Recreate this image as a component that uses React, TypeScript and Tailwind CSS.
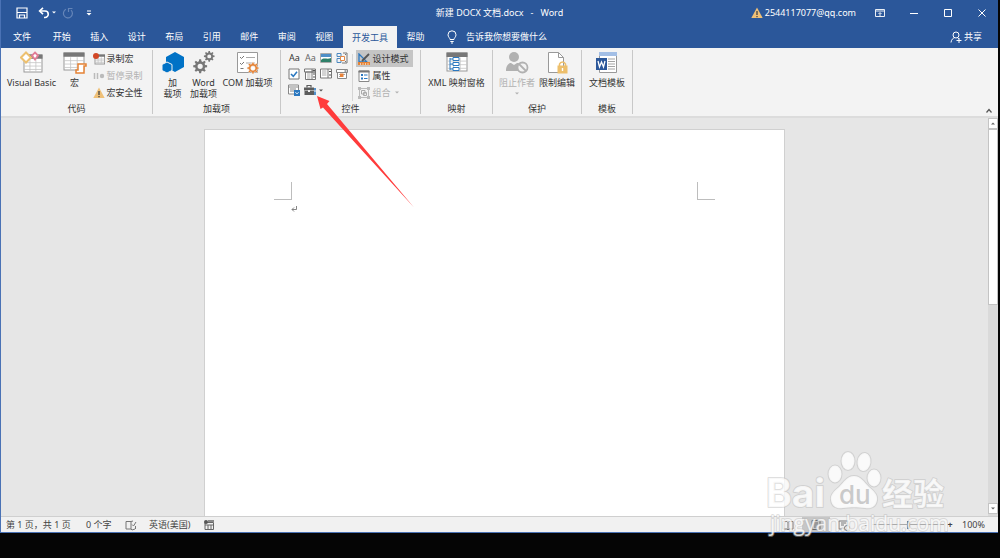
import type { ReactNode } from "react";
import clsx from "clsx";

const TABS = ["开始", "插入", "设计", "布局", "引用", "邮件", "审阅", "视图"];

const GEAR =
  "M10.6 2h2.8l.5 2.9 1.9.8 2.4-1.7 2 2-1.7 2.4.8 1.9 2.9.5v2.8l-2.9.5-.8 1.9 1.7 2.4-2 2-2.4-1.7-1.9.8-.5 2.9h-2.8l-.5-2.9-1.9-.8-2.4 1.7-2-2 1.7-2.4-.8-1.9-2.9-.5v-2.8l2.9-.5.8-1.9L3.8 6l2-2 2.4 1.7 1.9-.8zM12 8.5a3.8 3.8 0 1 0 0 7.6 3.8 3.8 0 0 0 0-7.6z";

function Warning({ className }: { className?: string }) {
  return (
    <svg viewBox="0 0 12 12" className={clsx("size-3 shrink-0", className)}>
      <path d="M6 .5 11.7 11H.3z" fill="#efc077" />
      <path d="M6 4v4M6 9v1.2" stroke="#444" strokeWidth="1.3" />
    </svg>
  );
}

function Caret({ className }: { className?: string }) {
  return (
    <svg viewBox="0 0 4 3" className={clsx("h-[3px] w-1 shrink-0", className)}>
      <path d="M0 .5h4L2 2.5z" fill="currentColor" />
    </svg>
  );
}

function Grid({ x, y, w, h }: { x: number; y: number; w: number; h: number }) {
  return (
    <g>
      <rect x={x} y={y} width={w} height={h} fill="#fff" stroke="#999" />
      <rect x={x - 0.5} y={y - 0.5} width={w + 1} height={h / 4} fill="#777" />
      <path
        d={`M${x} ${y + h * 0.45}h${w}M${x} ${y + h * 0.65}h${w}M${x} ${y + h * 0.85}h${w}M${x + w * 0.33} ${y + h * 0.25}v${h * 0.75}M${x + w * 0.66} ${y + h * 0.25}v${h * 0.75}`}
        stroke="#c4c4c4"
        strokeWidth=".8"
      />
    </g>
  );
}

function Small({ children }: { children: ReactNode }) {
  return (
    <svg viewBox="0 0 12 12" fill="none" className="size-3 shrink-0">
      {children}
    </svg>
  );
}

function BigButton({
  icon,
  lines,
  disabled,
  className,
}: {
  icon: ReactNode;
  lines: string[];
  disabled?: boolean;
  className: string;
}) {
  return (
    <button
      type="button"
      disabled={disabled}
      className={clsx(
        "flex shrink-0 flex-col items-center pt-px whitespace-nowrap",
        disabled && "text-[#b1b1b1]",
        className,
      )}
    >
      <svg viewBox="0 0 24 24" fill="none" className="size-6 shrink-0">
        {icon}
      </svg>
      <span className="mt-0.5 leading-[11px]">
        {lines.map((line) => (
          <span key={line} className="block">
            {line}
          </span>
        ))}
      </span>
      {disabled && <Caret className="mt-1" />}
    </button>
  );
}

function SmallButton({
  icon,
  label,
  disabled,
  active,
  caret,
}: {
  icon: ReactNode;
  label: string;
  disabled?: boolean;
  active?: boolean;
  caret?: boolean;
}) {
  return (
    <button
      type="button"
      disabled={disabled}
      className={clsx(
        "flex h-[17px] items-center gap-0.5 pr-1 pl-0.5 whitespace-nowrap",
        disabled && "text-[#b1b1b1]",
        active && "bg-[#c5c5c5]",
      )}
    >
      {icon}
      <span>{label}</span>
      {caret && <Caret className="ml-0.5" />}
    </button>
  );
}

function Group({
  label,
  className,
  children,
}: {
  label: string;
  className: string;
  children: ReactNode;
}) {
  return (
    <section
      aria-label={label}
      className={clsx(
        "flex h-16 shrink-0 flex-col justify-between border-r border-[#c8c8c8]",
        className,
      )}
    >
      <div className="flex justify-center">{children}</div>
      <h2 className="text-center leading-[11px]">{label}</h2>
    </section>
  );
}

function TitleBar() {
  return (
    <header className="grid h-[25px] grid-cols-[1fr_auto_1fr] items-center bg-[#2b579a] text-white">
      <div className="flex items-center pl-[15px]">
        <button type="button" aria-label="保存">
          <svg viewBox="0 0 12 12" fill="none" className="size-3">
            <path d="M1 1h10v10H1z" stroke="#fff" strokeWidth="1.2" />
            <path d="M1 5.5h10M3.500 11V8h5v3" stroke="#fff" strokeWidth="1.2" />
          </svg>
        </button>
        <button type="button" aria-label="撤消" className="ml-2.5 flex items-center gap-0.5">
          <svg viewBox="0 0 12 12" fill="none" className="size-3">
            <path d="M2 4h5a3.200 3.200 0 0 1 0 6.500H6" stroke="#fff" strokeWidth="1.6" />
            <path d="M5 .8 1.600 4 5 7.200" stroke="#fff" strokeWidth="1.6" />
          </svg>
          <Caret />
        </button>
        <button type="button" aria-label="重复" className="ml-1.5">
          <svg viewBox="0 0 12 12" fill="none" className="size-3">
            <path d="M4 2.300a4.500 4.500 0 1 0 5 .8M6.500 5V1.500H10.500" stroke="#6585b8" strokeWidth="1.2" />
          </svg>
        </button>
        <button type="button" aria-label="自定义快速访问工具栏" className="ml-3">
          <svg viewBox="0 0 6 6" className="size-1.5">
            <path d="M1 .5h4v1H1zM.5 3h5L3 5.500z" fill="#fff" />
          </svg>
        </button>
      </div>
      <h1>新建 DOCX 文档.docx&nbsp;&nbsp; -&nbsp;&nbsp; Word</h1>
      <div className="flex items-center justify-end pr-2.5">
        <Warning />
        <span className="ml-0.5">2544117077@qq.com</span>
        <button type="button" aria-label="功能区显示选项" className="ml-[18px]">
          <svg viewBox="0 0 12 12" fill="none" stroke="#fff" className="size-3">
            <path d="M1.500 2.500h9v7h-9zM1.500 4h9M6 9V6M4.500 7 6 5.500 7.500 7" strokeWidth=".9" />
          </svg>
        </button>
        <button type="button" aria-label="最小化" className="ml-[22px]">
          <svg viewBox="0 0 12 12" stroke="#fff" className="size-3">
            <path d="M2 6.500h8" />
          </svg>
        </button>
        <button type="button" aria-label="最大化" className="ml-[22px]">
          <svg viewBox="0 0 12 12" fill="none" stroke="#fff" className="size-3">
            <path d="M2.500 2.500h7v7h-7z" />
          </svg>
        </button>
        <button type="button" aria-label="关闭" className="ml-[22px]">
          <svg viewBox="0 0 12 12" stroke="#fff" className="size-3">
            <path d="m2.500 2.500 7 7m0-7-7 7" />
          </svg>
        </button>
      </div>
    </header>
  );
}

function TabBar() {
  return (
    <nav className="flex h-[23px] items-stretch bg-[#2b579a] text-white">
      <button type="button" className="w-[42px]">
        文件
      </button>
      <div className="grid w-[300px] shrink-0 grid-cols-8">
        {TABS.map((tab) => (
          <button key={tab} type="button">
            {tab}
          </button>
        ))}
      </div>
      <button type="button" className="mt-px w-[54px] bg-[#f3f3f3] text-[#2b579a]">
        开发工具
      </button>
      <button type="button" className="w-[37px]">
        帮助
      </button>
      <button type="button" className="ml-3 flex items-center gap-2">
        <svg viewBox="0 0 12 14" fill="none" stroke="#fff" className="h-3.5 w-3">
          <path d="M4 9.500C4 8 2 7 2 4.800a4 4 0 0 1 8 0C10 7 8 8 8 9.500zM4.300 11.500h3.400M5 13h2" />
        </svg>
        告诉我你想要做什么
      </button>
      <button type="button" className="mr-4 ml-auto flex items-center gap-0.5">
        <svg viewBox="0 0 12 12" fill="none" stroke="#fff" className="size-3">
          <circle cx="6" cy="4" r="3" />
          <path d="M1 11.500C1.300 8.500 3 7.200 4.500 6.800M7.500 6.800 9 8M9 7v5M6.500 9.500h5" />
        </svg>
        共享
      </button>
    </nav>
  );
}

function ControlGallery() {
  return (
    <div className="mt-0.5 grid grid-cols-[repeat(4,12px)] content-start gap-1">
      <button type="button" aria-label="格式文本内容控件" className="h-3 leading-3 text-[#333]">
        Aa
      </button>
      <button type="button" aria-label="纯文本内容控件" className="h-3 leading-3 text-[#666]">
        Aa
      </button>
      <button type="button" aria-label="图片内容控件">
        <Small>
          <path d="M.5 1.500h11v9H.5z" fill="#fff" stroke="#aaa" />
          <path d="M1 2h10v3H1z" fill="#4e8fc7" />
          <path d="M1 8c3-3 6 0 10-2v4H1z" fill="#2e8069" />
        </Small>
      </button>
      <button type="button" aria-label="构建基块库内容控件">
        <Small>
          <path d="M1 1.500h4v3H1zM1 6.500h4v4H1z" stroke="#4b88c0" />
          <path d="M7 1h4v10H6" stroke="#777" />
          <path d="M4.500 4.500h4v4h-4z" fill="#fff" stroke="#e58845" />
          <path d="M9 2.500h1M9 9.500h1" stroke="#777" />
        </Small>
      </button>
      <button type="button" aria-label="复选框内容控件">
        <Small>
          <path d="M1 1h10v10H1z" fill="#fff" stroke="#777" />
          <path d="m3 6 2.300 2.400L9 3.700" stroke="#2b78c0" strokeWidth="1.6" />
        </Small>
      </button>
      <button type="button" aria-label="组合框内容控件">
        <Small>
          <path d="M.5 1h11v3H.5zM1.500 4h10v7.500h-10zM8 1v10.500" fill="#fff" stroke="#777" />
          <path d="M3 6h3.500M3 8h3.500M3 10h3.500" stroke="#aaa" />
          <path d="M8.500 2.500h2.500M9 6h2M9 9h2" stroke="#555" />
        </Small>
      </button>
      <button type="button" aria-label="下拉列表内容控件">
        <Small>
          <path d="M.5 1h11v9H.5zM8 1v9" fill="#fff" stroke="#777" />
          <path d="M2 3h4.500M2 5h4.500M2 7h4.500" stroke="#aaa" />
          <path d="M9 3.500h2M9 7h2" stroke="#555" />
        </Small>
      </button>
      <button type="button" aria-label="日期选取器内容控件">
        <Small>
          <path d="M.5 1.500h11v3H.5zM1.500 4.500h9v6h-9z" fill="#fff" stroke="#888" />
          <path d="M8.500 3h2" stroke="#444" />
          <path d="M3 6.500h6M3 8.500h4" stroke="#aaa" />
          <path d="M4 5.500h3.500V9H4z" fill="#e8833a" />
        </Small>
      </button>
      <button type="button" aria-label="重复分区内容控件">
        <Small>
          <path d="M.5 1h10v9H.5z" fill="#fff" stroke="#888" />
          <path d="M.5 3h10M2 5h6M2 7h4" stroke="#888" />
          <path d="M6 6h6v6H6z" fill="#2b78c0" />
          <path d="m7.500 8.300 1.500 1.500 1.500-1.500" stroke="#fff" />
        </Small>
      </button>
      <button type="button" aria-label="旧式工具" className="col-span-2 flex items-center gap-[3px]">
        <Small>
          <path d="M0 3.500h10v3H0zM.5 7h9.500v4H.5z" fill="#5c5c5c" />
          <path d="M3 3.500V1.500h4v2" stroke="#5c5c5c" strokeWidth="1.2" />
          <path d="M4 6h2v2H4z" fill="#eee" />
          <path d="M11 4v2.500M11 7.500V11" stroke="#2b78c0" strokeWidth="1.6" />
        </Small>
        <Caret className="text-[#555]" />
      </button>
    </div>
  );
}

function Ribbon() {
  return (
    <div className="flex h-[70px] items-start border-b-2 border-[#dcdcdc] bg-[#f3f3f3] pt-0.5 text-[#333]">
      <Group label="代码" className="w-[152px]">
        <BigButton
          className="w-[62px]"
          lines={["Visual Basic"]}
          icon={
            <>
              <Grid x={4} y={4} w={18} h={17} />
              <path d="m6 1.500 5 5-5 5-5-5z" fill="#fff" stroke="#edc06f" strokeWidth="2" />
              <path d="m15 1.500 3 3-3 4-3-4z" fill="#fff" stroke="#e27d96" strokeWidth="1.8" />
            </>
          }
        />
        <BigButton
          className="w-6"
          lines={["宏"]}
          icon={
            <>
              <Grid x={1} y={2} w={20} h={17} />
              <path d="M15 13h8v2h-2v7h-8v-3h2z" fill="#fff" stroke="#e58336" strokeWidth="1.5" />
            </>
          }
        />
        <div className="mr-1.5 ml-1 flex flex-col">
          <SmallButton
            label="录制宏"
            icon={
              <Small>
                <Grid x={2} y={2} w={9.5} h={9} />
                <circle cx="3" cy="3" r="3" fill="#d24726" />
              </Small>
            }
          />
          <SmallButton
            label="暂停录制"
            disabled
            icon={
              <Small>
                <path d="M1.500 3v6M4.500 3v6" stroke="#bbb" strokeWidth="1.5" />
                <circle cx="9" cy="6" r="2.2" fill="#bbb" />
              </Small>
            }
          />
          <SmallButton label="宏安全性" icon={<Warning />} />
        </div>
      </Group>

      <Group label="加载项" className="w-32">
        <BigButton
          className="w-7"
          lines={["加", "载项"]}
          icon={
            <>
              <path d="m14 1 9 5v10l-9 5-9-5V6z" fill="#0072c6" />
              <path d="m6 11 5 2.500v6L6 22l-5-2.500v-6z" fill="#0072c6" stroke="#f3f3f3" />
            </>
          }
        />
        <BigButton
          className="w-[34px]"
          lines={["Word", "加载项"]}
          icon={
            <g fill="#777" fillRule="evenodd">
              <path d={GEAR} transform="translate(0 7) scale(.68)" />
              <path d={GEAR} transform="translate(11 -1) scale(.52)" />
            </g>
          }
        />
        <BigButton
          className="w-[54px]"
          lines={["COM 加载项"]}
          icon={
            <>
              <path d="M1.500 1.500h20v20h-20z" fill="#fff" stroke="#999" />
              <path d="m4 6 1.500 1.500L8 5m-4 7 1.500 1.500L8 11M4.500 17.500h3" stroke="#777" />
              <path d="M10 6.500h9M10 12h9" stroke="#aaa" />
              <path
                d={GEAR}
                fill="#e58336"
                stroke="#f3f3f3"
                fillRule="evenodd"
                transform="translate(10 10) scale(.58)"
              />
            </>
          }
        />
      </Group>

      <Group label="控件" className="w-[140px]">
        <ControlGallery />
        <div className="mt-1 mr-[3px] ml-1 w-px bg-[#d5d5d5]" />
        <div className="flex flex-col">
          <SmallButton
            label="设计模式"
            active
            icon={
              <Small>
                <path d="M1 1v8l8 0z" stroke="#2b78c0" strokeWidth="1.3" />
                <path d="m4 8 7-7" stroke="#555" strokeWidth="1.8" />
                <path d="M0 9h12v3H0z" fill="#e58336" />
                <path d="M2.500 10v2M5 10v2M7.500 10v2M10 10v2" stroke="#fff" strokeWidth=".6" />
              </Small>
            }
          />
          <SmallButton
            label="属性"
            icon={
              <Small>
                <path d="M1 1h10v10.500H1z" fill="#fff" stroke="#888" />
                <path d="M.5.5h11v2H.5z" fill="#777" />
                <path d="M3 4h2v2H3zM3 7.500h2v2H3z" fill="#2b78c0" />
                <path d="M6 5h3.500M6 8.500h3.500" stroke="#2b78c0" />
              </Small>
            }
          />
          <SmallButton
            label="组合"
            disabled
            caret
            icon={
              <Small>
                <path d="M1.500 1.500h9v9h-9z" stroke="#bbb" />
                <path d="M0 0h3v3H0zM9 0h3v3H9zM0 9h3v3H0zM9 9h3v3H9z" fill="#bbb" />
                <path d="M3.500 3.500h3.500v3.500H3.500zM5.500 5.500h3v3h-3z" stroke="#aaa" />
              </Small>
            }
          />
        </div>
      </Group>

      <Group label="映射" className="w-[72px]">
        <BigButton
          className="w-[62px]"
          lines={["XML 映射窗格"]}
          icon={
            <>
              <Grid x={2} y={2} w={20} h={18} />
              <path d="M5 7v12M5 8h4M5 13h4M5 18h4" stroke="#2b78c0" />
              <path d="M8 6.500h6v3H8zM8 11.500h6v3H8zM8 16.500h6v3H8z" fill="#fff" stroke="#2b78c0" />
            </>
          }
        />
      </Group>

      <Group label="保护" className="w-[89px]">
        <BigButton
          className="w-10"
          lines={["阻止作者"]}
          disabled
          icon={
            <>
              <circle cx="9" cy="6" r="5" fill="#b1b1b1" />
              <path d="M1 20c0-6 3-8 5-8l3 2 3-2c3 0 4 2 4 8z" fill="#b1b1b1" />
              <circle cx="17.500" cy="16.500" r="5" fill="#f3f3f3" stroke="#b1b1b1" strokeWidth="1.8" />
              <path d="m14 13 7 7" stroke="#b1b1b1" strokeWidth="1.8" />
            </>
          }
        />
        <BigButton
          className="w-10"
          lines={["限制编辑"]}
          icon={
            <>
              <path d="M3.500 1.500h10l5 5v15h-15z" fill="#fff" stroke="#999" />
              <path d="M13.500 1.500v5h5" stroke="#999" />
              <path d="M14.500 15v-2a3.200 3.200 0 0 1 6 0v2" stroke="#edbf6b" strokeWidth="1.5" />
              <path d="M12.500 14.500h10v8h-10z" fill="#edbf6b" />
              <path d="M17.500 17v3" stroke="#fff" strokeWidth="1.4" />
            </>
          }
        />
      </Group>

      <Group label="模板" className="w-[51px]">
        <BigButton
          className="w-10"
          lines={["文档模板"]}
          icon={
            <>
              <path d="M4.500 1.500h17v20h-17z" fill="#fff" stroke="#999" />
              <path d="M4 1h18v4H4z" fill="#a3bfe6" />
              <path d="M13 8h7M13 10.500h7M13 13h7M13 15.500h7M13 18h7" stroke="#999" strokeWidth=".9" />
              <path d="M1 7h11v12H1z" fill="#2b579a" />
              <path d="m3 10 1.500 6 2-5 2 5L10 10" stroke="#fff" strokeWidth="1.3" />
            </>
          }
        />
      </Group>

      <button type="button" aria-label="折叠功能区" className="mr-[5px] mb-0.5 ml-auto self-end">
        <svg viewBox="0 0 8 6" fill="none" stroke="#555" className="h-1.5 w-2">
          <path d="m1.500 4.500 2.500-3 2.500 3" strokeWidth="1.2" />
        </svg>
      </button>
    </div>
  );
}

function ScrollBar() {
  return (
    <div className="flex w-2.5 shrink-0 flex-col bg-[#dadada] pb-0.5">
      <button
        type="button"
        aria-label="向上滚动"
        className="grid h-[11px] place-items-center border border-[#c4c4c4] bg-white text-[#666]"
      >
        <Caret className="rotate-180" />
      </button>
      <div className="h-[176px] border border-[#c4c4c4] bg-white" />
      <button
        type="button"
        aria-label="向下滚动"
        className="mt-auto grid h-[11px] place-items-center border border-[#c4c4c4] bg-white text-[#666]"
      >
        <Caret />
      </button>
    </div>
  );
}

function Document() {
  return (
    <main className="flex flex-1 bg-[#e6e6e6]">
      <div className="flex flex-1 pt-[11px]">
        <article className="mx-auto w-[581px] border border-b-0 border-[#d0d0d0] bg-white px-[69px] pt-[52px]">
          <div className="flex justify-between">
            <div className="size-[18px] border-r border-b border-[#bdbdbd]" />
            <div className="size-[18px] border-b border-l border-[#bdbdbd]" />
          </div>
          <svg viewBox="0 0 6 6" fill="none" stroke="#777" className="mt-1.5 ml-[17px] size-1.5">
            <path d="M5.500 0v3.500H1M3 1.500l-2 2 2 2" strokeWidth=".9" />
          </svg>
        </article>
      </div>
      <ScrollBar />
    </main>
  );
}

function StatusBar() {
  return (
    <footer className="flex h-4 items-center border-t border-[#cfcfcf] bg-[#f1f1f1] pl-[5px] text-[#444]">
      <span className="w-20">第 1 页，共 1 页</span>
      <span className="w-[39px]">0 个字</span>
      <svg viewBox="0 0 12 12" fill="none" stroke="#777" className="size-3">
        <path d="M6 10V2.500H1V10h5l1 1 3-1M6 2.500 8 2M10.500 7v3M7 5.500l1.500 1.500L11 3" />
      </svg>
      <span className="ml-3 w-[54px]">英语(美国)</span>
      <svg viewBox="0 0 12 12" fill="none" stroke="#666" className="size-3">
        <path d="M2 3.500h8.500v7H2zM2 6h8.500M5 6v4M8 6v4" />
        <circle cx="3" cy="3" r="2" fill="#555" stroke="none" />
        <path d="M5 2h6" strokeWidth="1.5" />
      </svg>
      <div className="ml-auto flex items-center pr-[13px]">
        <button type="button" aria-label="阅读视图" className="grid h-[15px] w-7 place-items-center">
          <Small>
            <path d="M1 2.500h4l1 1 1-1h4V10H7l-1 1-1-1H1zM6 3.500V11" stroke="#777" />
          </Small>
        </button>
        <button
          type="button"
          aria-label="页面视图"
          className="grid h-[15px] w-7 place-items-center bg-[#c6c6c6]"
        >
          <Small>
            <path d="M2 1.500h8v9H2zM4 4h4M4 6h4M4 8h4" stroke="#666" />
          </Small>
        </button>
        <button type="button" aria-label="Web 版式视图" className="grid h-[15px] w-7 place-items-center">
          <Small>
            <path d="M1 2h9v8H1zM3 4h5M3 6h3" stroke="#777" />
            <circle cx="9" cy="9" r="2.5" fill="#f1f1f1" stroke="#777" />
          </Small>
        </button>
        <button type="button" aria-label="缩小" className="ml-1 w-2">
          -
        </button>
        <input
          type="range"
          aria-label="显示比例"
          defaultValue={50}
          className="mx-0.5 h-2.5 w-[72px] appearance-none bg-[linear-gradient(#aaa,#aaa)] bg-[length:100%_1px] bg-center bg-no-repeat [&::-webkit-slider-thumb]:h-2 [&::-webkit-slider-thumb]:w-[3px] [&::-webkit-slider-thumb]:appearance-none [&::-webkit-slider-thumb]:bg-[#666]"
        />
        <button type="button" aria-label="放大" className="w-2 font-bold">
          +
        </button>
        <span className="ml-2">100%</span>
      </div>
    </footer>
  );
}

function Watermark() {
  return (
    <svg
      viewBox="0 0 190 95"
      aria-hidden="true"
      className="pointer-events-none absolute right-[50px] -bottom-2 h-[95px] w-[190px]"
      fill="#fff"
      fillOpacity=".8"
      stroke="#b8b8b8"
      strokeOpacity=".45"
      strokeWidth="2"
      paintOrder="stroke"
      strokeLinejoin="round"
    >
      <text x="8" y="62" fontSize="39" fontWeight="700" fontFamily="Inter">
        Bai
      </text>
      <ellipse cx="77" cy="29" rx="6.5" ry="8.5" />
      <ellipse cx="90" cy="16" rx="6.5" ry="9" />
      <ellipse cx="106" cy="17" rx="6.5" ry="9" transform="rotate(8 106 17)" />
      <ellipse cx="116" cy="33" rx="6.5" ry="8.5" />
      <path d="M96 31c7 0 10 6 15 11 5 4 9 8 8 13-1 7-6 9-12 8-8-1-14-1-22 0-6 1-11-1-12-8-1-5 3-9 8-13 5-5 8-11 15-11z" />
      <text x="81" y="59" fontSize="26" fontWeight="500" fontFamily="Inter" fill="#bdbdbd" stroke="none">
        du
      </text>
      <text x="124" y="60" fontSize="31" fontWeight="700" fontFamily="Noto Sans CJK SC">
        经验
      </text>
      <text x="12" y="86" fontSize="21" fontFamily="Open Sans">
        jingyan.baidu.com
      </text>
    </svg>
  );
}

export default function App() {
  return (
    <div className="relative flex min-h-screen flex-col overflow-hidden bg-[#050505] pr-0.5 pb-[25px] font-['Noto_Sans','Noto_Sans_CJK_SC',sans-serif] text-[9px] leading-[11px]">
      <div className="relative flex flex-1 flex-col border-b border-l border-[#4a72b5]">
        <TitleBar />
        <TabBar />
        <Ribbon />
        <Document />
        <StatusBar />
        <Watermark />
      </div>
      <svg
        viewBox="0 0 98 113"
        aria-hidden="true"
        className="pointer-events-none absolute top-[95px] left-[316px] h-[113px] w-[98px]"
      >
        <path d="M1 1 13.500 6 11 9l87 103.500L7 12.500 4.500 14z" fill="#ff3b3b" />
      </svg>
    </div>
  );
}
